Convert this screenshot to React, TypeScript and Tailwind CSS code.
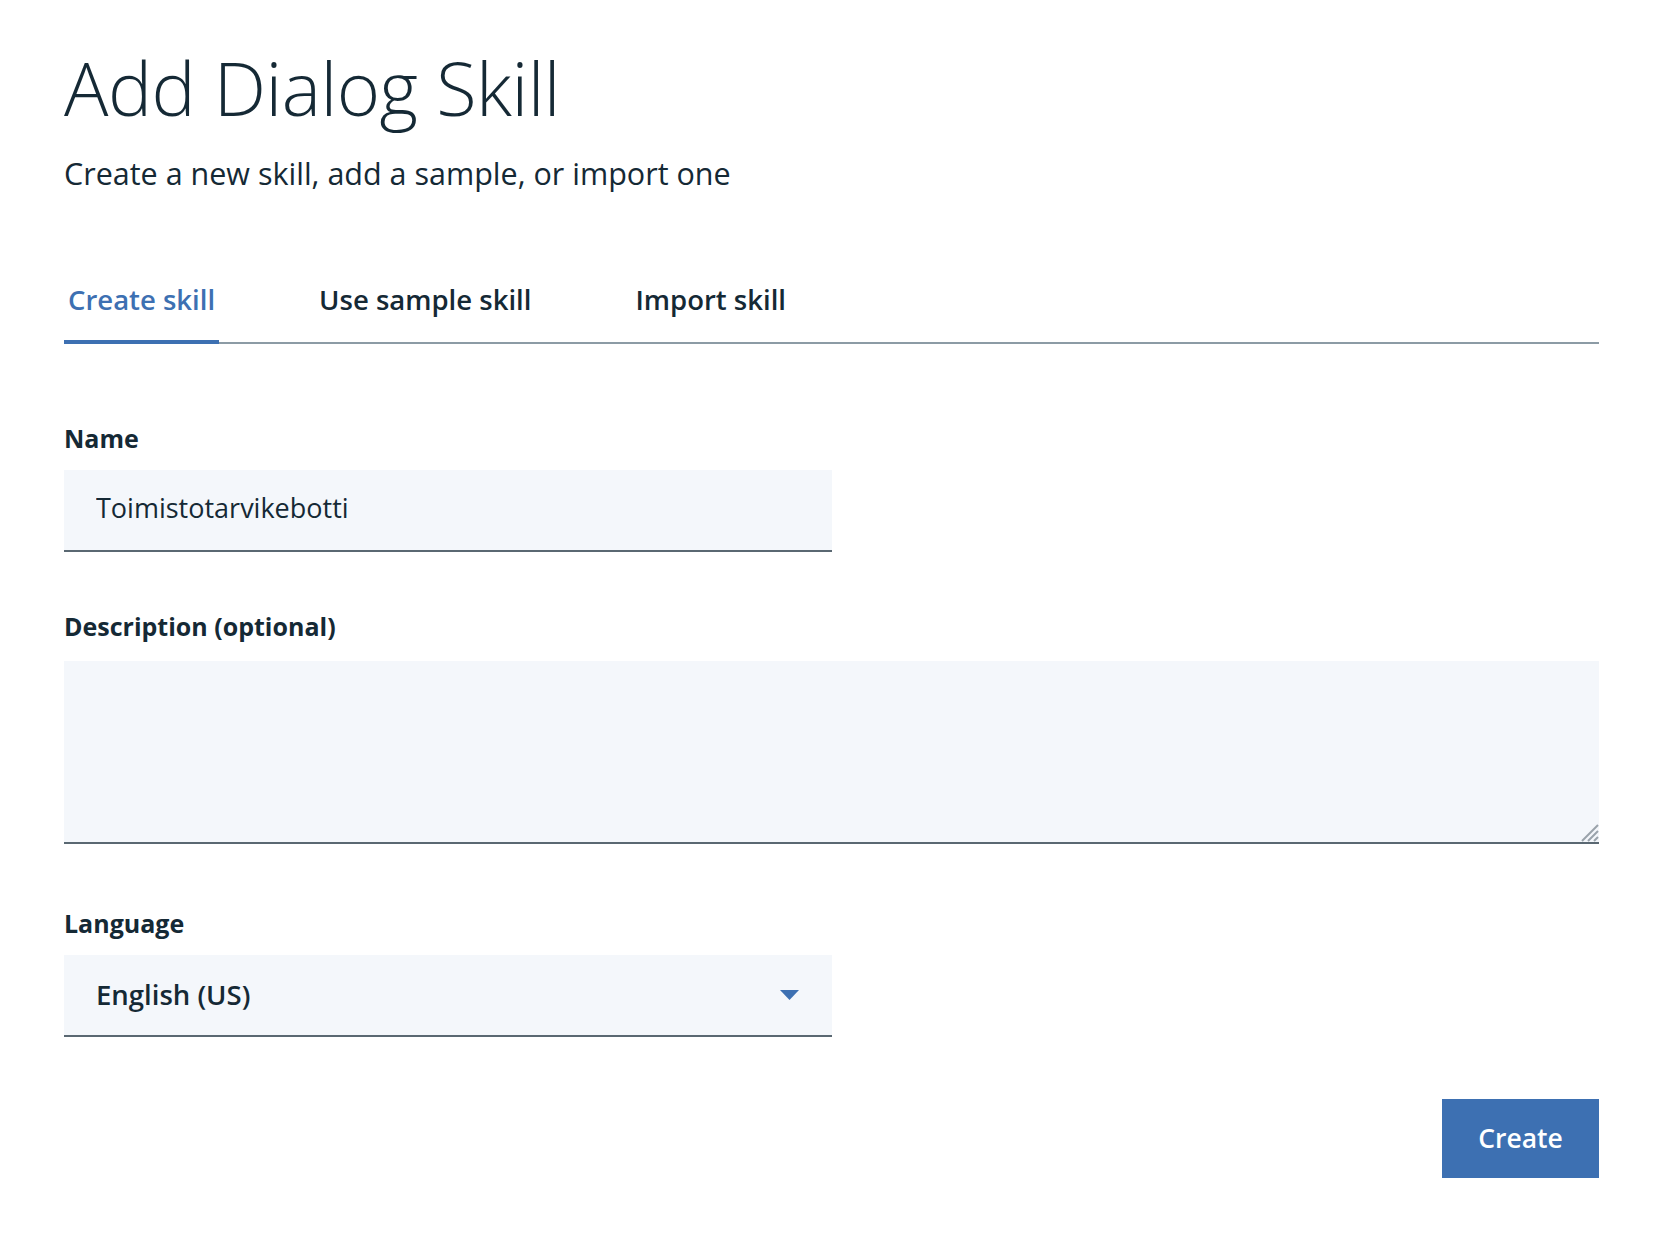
import { useState } from 'react';

const tabs = ['Create skill', 'Use sample skill', 'Import skill'];

function Field({ label, gap = 16, children }: { label: string; gap?: number; children: React.ReactNode }) {
  return (
    <div className="flex flex-col">
      <label className="text-[25px] font-bold leading-[32px] text-[#152935]">{label}</label>
      <div className={gap === 16 ? 'mt-[16px]' : 'mt-[19px]'}>{children}</div>
    </div>
  );
}

export default function App() {
  const [active, setActive] = useState(0);
  const [name, setName] = useState('Toimistotarvikebotti');

  return (
    <div
      className="min-h-screen bg-white pl-[64px] pr-[75px] pt-[44px] text-[#152935]"
      style={{ fontFamily: '"Open Sans", "Noto Sans", sans-serif' }}
    >
      <h1 className="text-[74px] font-light leading-[88px] tracking-[-0.5px]">Add Dialog Skill</h1>
      <p className="mt-[22px] text-[30.5px] leading-[38px]">Create a new skill, add a sample, or import one</p>

      {/* tabs */}
      <div className="mt-[90px] flex border-b-2 border-[#8c9ba5]">
        {tabs.map((t, i) => (
          <button
            key={t}
            onClick={() => setActive(i)}
            className={
              'mr-[96px] -mb-[2px] border-b-4 px-[4px] pb-[22px] text-[27.5px] font-semibold leading-[36px] ' +
              (i === active ? 'border-[#3d70b2] text-[#3d70b2]' : 'border-transparent text-[#152935]')
            }
          >
            {t}
          </button>
        ))}
      </div>

      <div className="mt-[78px] flex flex-col gap-[58px]">
        <Field label="Name">
          <input
            value={name}
            onChange={(e) => setName(e.target.value)}
            className="h-[82px] w-[768px] border-b-2 border-[#5a6872] bg-[#f4f7fb] px-[32px] pb-[5px] text-[27px] text-[#152935] outline-none"
          />
        </Field>

        <Field label="Description (optional)" gap={19}>
          <div className="relative">
            <textarea className="block h-[183px] w-full resize-none border-b-2 border-[#5a6872] bg-[#f4f7fb] px-[32px] py-[20px] text-[27px] outline-none" />
            <svg
              className="pointer-events-none absolute bottom-[2px] right-0"
              width="22"
              height="22"
              viewBox="0 0 22 22"
            >
              <path d="M21 5L5 21M21 11L11 21M21 17L17 21" stroke="#9aa3ab" strokeWidth="2" />
            </svg>
          </div>
        </Field>

        <div className="mt-[5px]">
          <Field label="Language">
            <div className="flex h-[82px] w-[768px] items-center justify-between border-b-2 border-[#5a6872] bg-[#f4f7fb] pl-[32px] pr-[33px]">
              <span className="text-[27.5px] font-semibold">English (US)</span>
              <svg width="19" height="10" viewBox="0 0 19 10">
                <path d="M0 0h19L9.5 10z" fill="#3d70b2" />
              </svg>
            </div>
          </Field>
        </div>
      </div>

      <div className="mt-[62px] flex justify-end">
        <button className="h-[79px] w-[157px] bg-[#3d70b2] text-[26.5px] font-semibold text-white">Create</button>
      </div>
    </div>
  );
}
